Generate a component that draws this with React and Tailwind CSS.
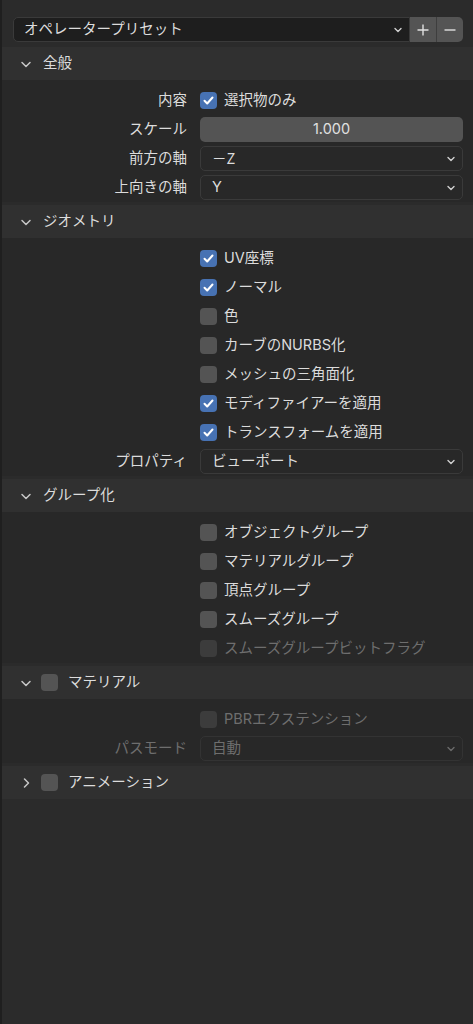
import React from 'react';

const Chevron = ({ open = true, className = '' }) => (
  <svg width="12" height="12" viewBox="0 0 12 12" className={className}>
    {open ? (
      <path d="M2 4.5 L6 8.5 L10 4.5" fill="none" stroke="#c8c8c8" strokeWidth="1.5" strokeLinecap="round" strokeLinejoin="round" />
    ) : (
      <path d="M4.5 2 L8.5 6 L4.5 10" fill="none" stroke="#c8c8c8" strokeWidth="1.5" strokeLinecap="round" strokeLinejoin="round" />
    )}
  </svg>
);

const SmallChevron = ({ dim }) => (
  <svg width="10" height="10" viewBox="0 0 10 10">
    <path d="M2 3.5 L5 6.5 L8 3.5" fill="none" stroke={dim ? '#6a6a6a' : '#d0d0d0'} strokeWidth="1.4" strokeLinecap="round" strokeLinejoin="round" />
  </svg>
);

const Check = ({ checked, dim }) => (
  <div
    className={`w-[17px] h-[17px] rounded-[4px] flex items-center justify-center shrink-0 ${
      checked ? 'bg-[#4772b3]' : dim ? 'bg-[#3c3c3c]' : 'bg-[#545454]'
    }`}
  >
    {checked && (
      <svg width="13" height="13" viewBox="0 0 13 13">
        <path d="M2.5 6.8 L5.2 9.5 L10.5 3.5" fill="none" stroke="#fff" strokeWidth="2" strokeLinecap="round" strokeLinejoin="round" />
      </svg>
    )}
  </div>
);

const Row = ({ label, dim, children }) => (
  <div className="flex items-center h-[25px]">
    <div className={`w-[185px] text-right ${dim ? 'text-[#6e6e6e]' : 'text-[#dcdcdc]'}`}>{label}</div>
    <div className="ml-[13px] w-[263px] flex items-center">{children}</div>
  </div>
);

const CheckRow = ({ text, checked, dim, label }) => (
  <Row label={label}>
    <Check checked={checked} dim={dim} />
    <span className={`ml-[7px] ${dim ? 'text-[#6e6e6e]' : 'text-[#dcdcdc]'}`}>{text}</span>
  </Row>
);

const Select = ({ value, dim }) => (
  <div className={`w-full h-[25px] rounded-[5px] border bg-[#282828] flex items-center justify-between pl-[11px] pr-[6px] ${dim ? 'text-[#6e6e6e] border-[#333333]' : 'text-[#dcdcdc] border-[#3a3a3a]'}`}>
    <span>{value}</span>
    <SmallChevron dim={dim} />
  </div>
);

const Header = ({ title, open = true, check }) => (
  <div className="h-[33px] bg-[#303030] flex items-center pl-[18px] text-[#dcdcdc]">
    <Chevron open={open} />
    {check ? (
      <>
        <div className="ml-[9px]"><Check /></div>
        <span className="ml-[10px]">{title}</span>
      </>
    ) : (
      <span className="ml-[11px]">{title}</span>
    )}
  </div>
);

const Panel = ({ title, open, check, children }) => (
  <div className="mb-[3px]">
    <Header title={title} open={open} check={check} />
    {children && <div className="bg-[#282828] pt-[8px] pb-[2px] flex flex-col gap-[4px]">{children}</div>}
  </div>
);

export default function App() {
  return (
    <div
      className="w-[473px] h-[1024px] bg-[#2b2b2b] border-l-2 border-[#1f1f1f] text-[14.5px] leading-none overflow-hidden"
      style={{ fontFamily: 'Inter, "Noto Sans CJK JP", sans-serif' }}
    >
      <div className="pt-[17px] pl-[11px] pr-[10px] pb-[5px] flex">
        <div className="flex-1 h-[25px] bg-[#1e1e1e] border border-[#3a3a3a] rounded-l-[5px] flex items-center justify-between pl-[10px] pr-[6px] text-[#dcdcdc]">
          <span>オペレータープリセット</span>
          <SmallChevron />
        </div>
        <div className="w-[27px] h-[25px] bg-[#545454] flex items-center justify-center border-r border-[#3e3e3e]">
          <svg width="14" height="14" viewBox="0 0 14 14"><path d="M7 1.5 V12.5 M1.5 7 H12.5" stroke="#e0e0e0" strokeWidth="1.4" /></svg>
        </div>
        <div className="w-[26px] h-[25px] bg-[#545454] rounded-r-[5px] flex items-center justify-center">
          <svg width="14" height="14" viewBox="0 0 14 14"><path d="M1.5 7 H12.5" stroke="#e0e0e0" strokeWidth="1.4" /></svg>
        </div>
      </div>

      <Panel title="全般">
        <CheckRow text="選択物のみ" checked label="内容" />
        <Row label="スケール">
          <div className="w-full h-[25px] rounded-[5px] bg-[#545454] flex items-center justify-center text-[#e0e0e0]">1.000</div>
        </Row>
        <Row label="前方の軸"><Select value={<span style={{ fontFamily: '"Noto Sans CJK JP", sans-serif' }}>－Z</span>} /></Row>
        <Row label="上向きの軸"><Select value="Y" /></Row>
      </Panel>

      <Panel title="ジオメトリ">
        <CheckRow text="UV座標" checked />
        <CheckRow text="ノーマル" checked />
        <CheckRow text="色" />
        <CheckRow text="カーブのNURBS化" />
        <CheckRow text="メッシュの三角面化" />
        <CheckRow text="モディファイアーを適用" checked />
        <CheckRow text="トランスフォームを適用" checked />
        <Row label="プロパティ"><Select value="ビューポート" /></Row>
      </Panel>

      <Panel title="グループ化">
        <CheckRow text="オブジェクトグループ" />
        <CheckRow text="マテリアルグループ" />
        <CheckRow text="頂点グループ" />
        <CheckRow text="スムーズグループ" />
        <CheckRow text="スムーズグループビットフラグ" dim />
      </Panel>

      <Panel title="マテリアル" check>
        <CheckRow text="PBRエクステンション" dim />
        <Row label="パスモード" dim><Select value="自動" dim /></Row>
      </Panel>

      <Panel title="アニメーション" check open={false} />
    </div>
  );
}
